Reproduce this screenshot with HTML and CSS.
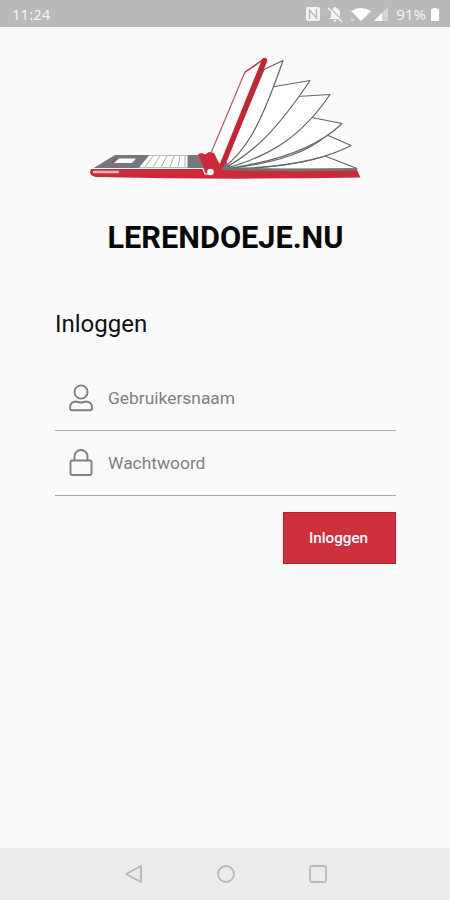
FILE: index.html
```html
<!DOCTYPE html>
<html lang="nl">
<head>
    <meta charset="UTF-8">
    <meta name="viewport" content="width=device-width, initial-scale=1.0">
    <title>Lerendoeje.nu</title>
    <link rel="stylesheet" href="styles.css">
</head>
<body>

    <header class="status-bar">
        <span class="time">11:24</span>
        <svg class="status-icons" viewBox="0 0 86 18" width="86" height="18">
            <!-- nfc -->
            <rect x="1" y="2" width="14" height="14" rx="2" fill="#f4f4f4"/>
            <path d="M4.500 14V5l7 8V4" fill="none" stroke="#b9b9b9" stroke-width="1.5"/>
            <!-- bell off -->
            <path d="M24 14l2-2V8c0-3 1-4 3-5V2h2v1c3 1 4 2 4 5v4l2 2zM28 15h4l-2 2z" fill="#f4f4f4"/>
            <path d="M24 2l14 14" stroke="#b9b9b9" stroke-width="1.2"/>
            <path d="M23 3l14 14" stroke="#f4f4f4" stroke-width="1.4"/>
            <!-- wifi and signal -->
            <path d="M46 6q10-6 20 0L56 16z" fill="#fff"/>
            <path d="M46 12l4 4h-4z" fill="#d4d4d4"/>
            <path d="M69 16L83 2v14z" fill="#d4d4d4"/>
            <path d="M69 16l8-8v8z" fill="#fff"/>
        </svg>
        <span class="percent">91%</span>
        <svg class="battery" viewBox="0 0 8 13" width="8" height="13">
            <path d="M2 0h4v1h2v12H0V1h2z" fill="#fff"/>
        </svg>
    </header>

    <main>
        <svg class="logo" viewBox="88 54 274 128" width="274" height="128">
            <!-- pages -->
            <g fill="#fff" stroke="#666" stroke-width="1.2" stroke-linejoin="round">
                <path d="M325 156L357 168.500Q290 169.500 224 169.500Q290 168 325 156z"/>
                <path d="M327 135L351 145.500C322 161 274 168 224 169C280 163 309 151 327 135z"/>
                <path d="M309 117L342 123.500C314 151 269 163 224 169C265 157 287 143 309 117z"/>
                <path d="M297 96.500L330 94.500C300 139 266 158 223 169C256 150 277 126 297 96.500z"/>
                <path d="M272 87L310 80.500C277 130 253 153 223 169C247 143 257 126 272 87z"/>
                <path d="M264 69.500L283 60.500C260 127 246 151 222 169z"/>
            </g>
            <!-- screen -->
            <path d="M211 153L245 72L263 59L222 164z" fill="#fff"/>
            <path d="M211 153L245 72" fill="none" stroke="#b95761" stroke-width="1.2"/>
            <path d="M244.500 72.500L264 59" stroke="#c92432" stroke-width="1.5"/>
            <path d="M264.500 60.500L222 166" stroke="#c92432" stroke-width="5.500" stroke-linecap="round"/>
            <!-- laptop -->
            <path d="M92 169L115 155H200L208 170z" fill="#77777a"/>
            <path d="M114 163L119 158.500H136L132 163z" fill="#fff"/>
            <path d="M112 163L116 158.500" stroke="#c92432"/>
            <path d="M139 167.500L149 155.500H187.500V167.500z" fill="#fff"/>
            <path d="M153 156L145 167M160 156L153 167M167 156L161 167M174 156L170 167M180 156L178 167M185 156V167" stroke="#999" stroke-width=".8"/>
            <path d="M91 169L204 168L198 154L202 153L205 154.500L209 152L214 153L219 163L222 165L227 170H357L360.500 177.500Q225 180 96 177Q90 176 90 172z" fill="#ce2938"/>
            <path d="M92 168.500L203 168.500L205 174H208" fill="none" stroke="#fff" stroke-width="1.2"/>
            <path d="M222 169L226 162L231 167Q290 170 357 168.500V170.500Q290 172 222 170z" fill="#737376"/>
            <path d="M94 172H118" stroke="#f5b4b9" stroke-width="2.5" stroke-linecap="round"/>
            <circle cx="210.500" cy="172" r="3.300" fill="#fff"/>
        </svg>

        <h1>LERENDOEJE.NU</h1>

        <form class="login">
            <h2>Inloggen</h2>
            <label class="field">
                <svg viewBox="0 0 24 28" width="24" height="28">
                    <circle cx="12" cy="8" r="6.600"/>
                    <path d="M6.500 17.500C9 17.500 9.500 18.500 12 18.500S15 17.500 17.500 17.500Q23 18 23 24Q23 26.200 21 26.200H3Q1 26.200 1 24Q1 18 6.500 17.500z"/>
                </svg>
                <input type="text" placeholder="Gebruikersnaam">
            </label>
            <label class="field">
                <svg viewBox="0 0 24 28" width="24" height="28">
                    <rect x="1.500" y="11.500" width="21" height="14.500" rx="1.500"/>
                    <path d="M5.500 11.500V7.500a6.500 6.500 0 0 1 13 0v4"/>
                </svg>
                <input type="password" placeholder="Wachtwoord">
            </label>
            <button type="button">Inloggen</button>
        </form>
    </main>

    <nav class="nav-bar">
        <svg viewBox="0 0 20 20" width="20" height="20"><path d="M2 10L17 2V18z"/></svg>
        <svg viewBox="0 0 20 20" width="20" height="20"><circle cx="10" cy="10" r="8"/></svg>
        <svg viewBox="0 0 20 20" width="20" height="20"><rect x="2" y="2" width="16" height="16" rx="2"/></svg>
    </nav>

</body>
</html>
```

FILE: styles.css
```css
* { box-sizing: border-box; }
body { margin: 0; height: 900px; display: flex; flex-direction: column; background-color: #fafafa; color: #111; font-family: Roboto, "Liberation Sans", sans-serif; }
svg { display: block; }
.status-bar { height: 27px; flex: none; display: flex; align-items: center; padding: 1px 11px 0 12px; background-color: #b9b9b9; color: #f4f4f4; font-family: "Noto Sans", sans-serif; font-size: 15px; }
.status-icons { margin-left: auto; }
.percent { margin-left: 5px; }
.battery { margin-left: 5px; }
main { flex: 1; display: flex; flex-direction: column; align-items: center; padding: 27px 54px 0 55px; }
.logo { margin-right: 1px; }
h1 { margin: 38px 0 0; font-size: 30.7px; line-height: 36px; font-weight: 700; color: #080808; }
.login { width: 100%; display: flex; flex-direction: column; margin-top: 54px; }
h2 { margin: 0 0 28px; font-size: 24px; line-height: 28px; font-weight: 400; }
.field { height: 65px; display: flex; align-items: center; padding-left: 14px; border-bottom: 1px solid #aaa; }
.field svg { fill: none; stroke: #808080; stroke-width: 1.9; }
.field input { flex: 1; min-width: 0; margin-left: 15px; padding: 0; border: 0; outline: 0; background: none; font: 17.4px Roboto, sans-serif; }
.field input::placeholder { color: #808080; opacity: 1; }
.login button { align-self: flex-end; width: 113px; height: 52px; margin-top: 16px; padding: 0 2px 0 0; border: 1px solid #c41e2c; background-color: #cf303b; color: #fff; font: 500 15.2px Roboto, sans-serif; }
.nav-bar { height: 52px; flex: none; display: flex; align-items: center; justify-content: center; gap: 72px; padding-left: 1px; background-color: #ebebeb; }
.nav-bar svg { fill: none; stroke: #b8b8b8; stroke-width: 1.8; stroke-linejoin: round; }
```
